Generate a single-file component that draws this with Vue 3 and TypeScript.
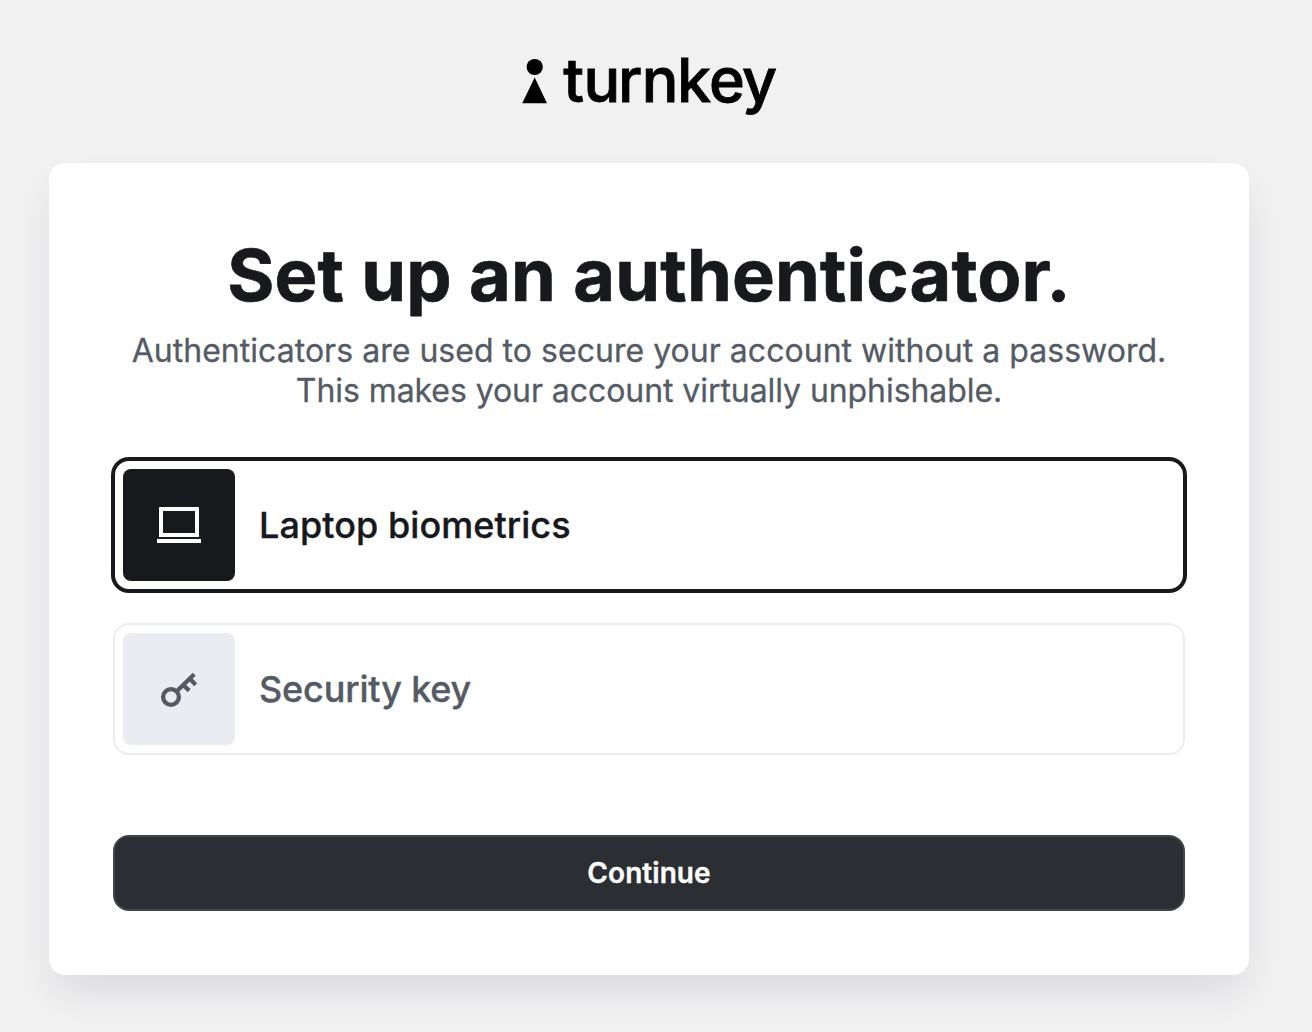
<script setup lang="ts">
import { ref } from 'vue'

type Method = 'laptop' | 'key'

const options: { id: Method; label: string }[] = [
  { id: 'laptop', label: 'Laptop biometrics' },
  { id: 'key', label: 'Security key' },
]
const selected = ref<Method>('laptop')
</script>

<template>
  <main class="page">
    <svg class="logo" width="260" height="84" viewBox="0 -10 260 84" role="img" aria-label="turnkey">
      <circle cx="15.7" cy="12" r="8.1" />
      <path d="M15.7 22.5 28 48.3H3.2Z" />
      <text class="wordmark" x="44.3 64.5 99 122.7 158 190 223" y="47.2">turnkey</text>
    </svg>

    <section class="card">
      <h1>Set up an authenticator.</h1>
      <p class="intro">
        Authenticators are used to secure your account without a password.<br />
        <span class="second">This makes your account virtually unphishable.</span>
      </p>

      <div class="options">
        <button
          v-for="option in options"
          :key="option.id"
          type="button"
          class="option"
          :class="[option.id, { selected: selected === option.id }]"
          @click="selected = option.id"
        >
          <span class="tile">
            <svg v-if="option.id === 'laptop'" width="48" height="48" viewBox="0 0 48 48" fill="currentColor">
              <path fill-rule="evenodd" d="M5 6h38a1 1 0 0 1 1 1v29H4V7a1 1 0 0 1 1-1ZM8 10v22h32V10Z" />
              <path d="M2 38h44v4H2z" />
            </svg>
            <svg v-else width="48" height="48" viewBox="0 0 48 48" fill="none" stroke="currentColor" stroke-width="4.3">
              <circle cx="16" cy="32" r="7.9" />
              <path d="M21.5 26.5 39.2 9.2M28.3 20l5.9 5.6M34.8 13.8l5.9 5.9" />
            </svg>
          </span>
          <span class="label">{{ option.label }}</span>
        </button>
      </div>

      <button type="button" class="continue">Continue</button>
    </section>
  </main>
</template>

<style>
body {
  background: #f1f1f1;
}
</style>

<style scoped>
.page {
  box-sizing: border-box;
  width: 1298px;
  height: 1032px;
  padding-top: 45px;
  display: flex;
  flex-direction: column;
  align-items: center;
  font-family: Inter, "Liberation Sans", sans-serif;
}
.logo {
  display: block;
  flex: none;
  margin-bottom: 34px;
  overflow: visible;
}
.wordmark {
  font-size: 61px;
  font-weight: 500;
  stroke: #000;
  stroke-width: 0.8px;
}
.card {
  box-sizing: border-box;
  width: 1200px;
  height: 812px;
  padding: 64px;
  display: flex;
  flex-direction: column;
  background: #fff;
  border-radius: 16px;
  box-shadow: 0 20px 40px -8px rgba(30, 20, 80, 0.12);
}
h1 {
  margin: 0 0 8px;
  font-size: 72px;
  line-height: 96px;
  font-weight: 700;
  letter-spacing: 0.17px;
  text-align: center;
  color: #18191d;
  white-space: nowrap;
  -webkit-text-stroke: 0.7px #18191d;
}
.intro {
  margin: 0 0 48px;
  font-size: 32px;
  line-height: 40px;
  letter-spacing: 0.03px;
  text-align: center;
  color: #555b65;
  white-space: nowrap;
  -webkit-text-stroke: 0.3px #555b65;
}
.second {
  letter-spacing: -0.07px;
}
.options {
  display: flex;
  flex-direction: column;
  gap: 32px;
}
.option {
  box-sizing: border-box;
  height: 132px;
  padding: 8px;
  display: flex;
  align-items: center;
  gap: 24px;
  border: 2px solid #ebecf2;
  border-radius: 16px;
  background: #fff;
  color: #555b65;
  font-family: inherit;
}
.option.selected {
  border-color: #18191d;
  box-shadow: 0 0 0 2px #18191d;
  color: #18191d;
}
.tile {
  width: 112px;
  height: 112px;
  display: flex;
  align-items: center;
  justify-content: center;
  border-radius: 8px;
  background: #ebecf2;
}
.selected .tile {
  background: #18191d;
  color: #fff;
}
.label {
  font-size: 36px;
  line-height: 48px;
  font-weight: 500;
  letter-spacing: 0.06px;
  -webkit-text-stroke: 0.35px currentColor;
}
.key .label {
  letter-spacing: -0.16px;
}
.continue {
  box-sizing: border-box;
  height: 76px;
  margin-top: 80px;
  padding: 0;
  border: 2px solid #3f464b;
  border-radius: 16px;
  background: #2b2e33;
  color: #fff;
  font-family: inherit;
  font-size: 28px;
  font-weight: 600;
  letter-spacing: 0.05px;
  -webkit-text-stroke: 0.35px #fff;
}
</style>
